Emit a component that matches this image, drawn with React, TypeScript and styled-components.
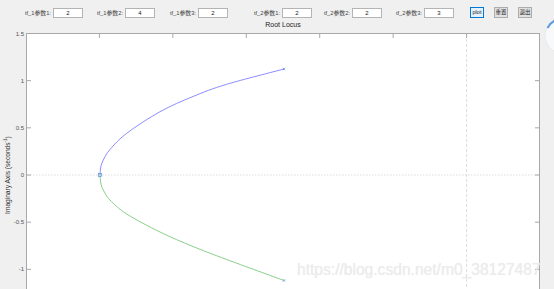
import React from "react";
import styled, { createGlobalStyle } from "styled-components";

const GlobalStyle = createGlobalStyle`
  html, body { margin: 0; padding: 0; background: #f0f0f0; }
  body { font-family: "Liberation Sans", Arial, "Noto Sans CJK SC", sans-serif; }
`;

const Page = styled.div`
  position: relative;
  width: 554px;
  height: 289px;
  overflow: hidden;
  background: #f0f0f0;
  display: flex;
  flex-direction: column;
`;

const Toolbar = styled.div`
  display: flex;
  align-items: center;
  height: 11px;
  margin-top: 7px;
`;

const Field = styled.div<{ $offset: number }>`
  display: flex;
  align-items: center;
  margin-left: ${(p) => p.$offset}px;
`;

const Label = styled.span`
  width: 30px;
  margin-right: 2px;
  text-align: right;
  font-size: 5.8px;
  color: #444;
  white-space: nowrap;
  font-family: "Liberation Sans", "Noto Sans CJK SC", sans-serif;
`;

const Input = styled.input`
  box-sizing: border-box;
  width: 30px;
  height: 10px;
  padding: 0;
  border: 1px solid #b4b4b4;
  background: #fff;
  font-size: 6px;
  text-align: center;
  color: #222;
  font-family: "Liberation Sans", sans-serif;
  outline: none;
`;

const Buttons = styled.div`
  display: flex;
  gap: 10px;
  margin-left: 16px;
`;

const Button = styled.button<{ $focused?: boolean }>`
  box-sizing: border-box;
  width: 14px;
  height: 11px;
  padding: 0;
  font-size: 5.5px;
  color: #222;
  background: ${(p) => (p.$focused ? "#e5f1fb" : "#e1e1e1")};
  border: 1px solid ${(p) => (p.$focused ? "#0078d7" : "#adadad")};
  font-family: "Liberation Sans", "Noto Sans CJK SC", sans-serif;
  line-height: 9px;
`;

const Title = styled.div`
  margin-left: 26px;
  width: 514px;
  margin-top: 3px;
  height: 8px;
  line-height: 8px;
  text-align: center;
  font-size: 7px;
  color: #222;
`;

const ChartRow = styled.div`
  display: flex;
  margin-top: 4px;
  height: 284px;
  flex-shrink: 0;
`;

const AxisLabelCol = styled.div`
  width: 14px;
  display: flex;
  align-items: center;
  justify-content: center;
`;

const AxisLabel = styled.span`
  transform: rotate(-90deg);
  white-space: nowrap;
  font-size: 6.6px;
  color: #333;
`;

const TickCol = styled.div`
  position: relative;
  width: 12px;
`;

const TickLabel = styled.span`
  position: absolute;
  right: 2px;
  font-size: 6px;
  line-height: 6px;
  color: #555;
  transform: translateY(-50%);
`;

const PlotFrame = styled.div`
  box-sizing: border-box;
  width: 514px;
  height: 284px;
  border: 1px solid #a8a8a8;
  background: #fff;
`;

const PlotSvg = styled.svg`
  display: block;
`;

const Watermark = styled.div`
  position: absolute;
  left: 297px;
  top: 262px;
  font-size: 15.6px;
  line-height: 16px;
  color: #ececec;
  text-shadow: 0 0 1px rgba(0, 0, 0, 0.08);
  white-space: nowrap;
  font-family: "Liberation Sans", Arial, sans-serif;
`;

const CornerBadge = styled.svg`
  position: absolute;
  left: 540px;
  top: 16px;
`;

const fields = [
  { label: "tf_1参数1:", value: "2", offset: 21 },
  { label: "tf_1参数2:", value: "4", offset: 10 },
  { label: "tf_1参数3:", value: "2", offset: 11 },
  { label: "tf_2参数1:", value: "2", offset: 22 },
  { label: "tf_2参数2:", value: "2", offset: 8 },
  { label: "tf_2参数3:", value: "3", offset: 10 },
];

const Y0 = 175;
const YS = 94.33;
const yOf = (v: number) => Y0 - v * YS;
const yTicks = [1.5, 1, 0.5, 0, -0.5, -1];
const xTicks = [1, 2, 3, 4, 5, 6].map((i) => 26 + 73.43 * i);

type P = [number, number];
function smooth(pts: P[]): string {
  let d = `M${pts[0][0]},${pts[0][1]}`;
  for (let i = 0; i < pts.length - 1; i++) {
    const p0 = pts[i - 1] || pts[i];
    const p1 = pts[i];
    const p2 = pts[i + 1];
    const p3 = pts[i + 2] || p2;
    const c1: P = [p1[0] + (p2[0] - p0[0]) / 6, p1[1] + (p2[1] - p0[1]) / 6];
    const c2: P = [p2[0] - (p3[0] - p1[0]) / 6, p2[1] - (p3[1] - p1[1]) / 6];
    d += ` C${c1[0].toFixed(2)},${c1[1].toFixed(2)} ${c2[0].toFixed(2)},${c2[1].toFixed(2)} ${p2[0]},${p2[1]}`;
  }
  return d;
}

const upper: P[] = [
  [100, 175], [100.8, 167], [103.3, 160], [110, 149.5], [126.7, 133.3],
  [160, 111.7], [193, 96.5], [226.7, 84.3], [284, 69],
];
const lower: P[] = [
  [100, 175], [100.8, 183], [103.3, 190], [110, 200], [126.7, 214],
  [160, 232], [193, 246.5], [226.7, 259.5], [284, 280.5],
];

export default function App() {
  return (
    <Page>
      <GlobalStyle />
      <Toolbar>
        {fields.map((f) => (
          <Field key={f.label} $offset={f.offset}>
            <Label>{f.label}</Label>
            <Input defaultValue={f.value} />
          </Field>
        ))}
        <Buttons>
          <Button $focused>plot</Button>
          <Button>重置</Button>
          <Button>退出</Button>
        </Buttons>
      </Toolbar>
      <Title>Root Locus</Title>
      <ChartRow>
        <AxisLabelCol>
          <AxisLabel>
            Imaginary Axis (seconds<sup style={{ fontSize: "4.5px" }}>-1</sup>)
          </AxisLabel>
        </AxisLabelCol>
        <TickCol>
          {yTicks.map((v) => (
            <TickLabel key={v} style={{ top: yOf(v) - 33 }}>
              {v}
            </TickLabel>
          ))}
        </TickCol>
        <PlotFrame>
          <PlotSvg width={512} height={282} viewBox="27 34 512 282">
            <line x1={27} y1={175} x2={539} y2={175} stroke="#d4d4d4" strokeWidth={0.8} strokeDasharray="1.5 1.5" />
            <line x1={466.6} y1={34} x2={466.6} y2={316} stroke="#d4d4d4" strokeWidth={0.8} strokeDasharray="3 2" />
            {xTicks.map((x) => (
              <line key={x} x1={x} y1={34} x2={x} y2={38} stroke="#a8a8a8" strokeWidth={1} />
            ))}
            {yTicks.map((v) => (
              <g key={v}>
                <line x1={27} y1={yOf(v)} x2={31} y2={yOf(v)} stroke="#a8a8a8" strokeWidth={1} />
                <line x1={535} y1={yOf(v)} x2={539} y2={yOf(v)} stroke="#a8a8a8" strokeWidth={1} />
              </g>
            ))}
            <path d={smooth(upper)} fill="none" stroke="#6f6fff" strokeWidth={0.8} />
            <path d={smooth(lower)} fill="none" stroke="#6cc26c" strokeWidth={0.8} />
            <rect x={98.6} y={173.6} width={2.8} height={2.8} fill="none" stroke="#4f8fd8" strokeWidth={0.7} />
            <g stroke="#4f8fd8" strokeWidth={0.7}>
              <line x1={282.8} y1={67.8} x2={285.2} y2={70.2} />
              <line x1={282.8} y1={70.2} x2={285.2} y2={67.8} />
              <line x1={282.8} y1={279.3} x2={285.2} y2={281.7} />
              <line x1={282.8} y1={281.7} x2={285.2} y2={279.3} />
            </g>
          </PlotSvg>
        </PlotFrame>
      </ChartRow>
      <Watermark>https://blog.csdn.net/m0_38127487</Watermark>
      <CornerBadge width={30} height={40} viewBox="0 0 30 40">
        <circle cx={22} cy={20} r={17} fill="#f8f9fb" stroke="#e6e9ee" strokeWidth={1} />
        <path d="M7.5 12 A17 17 0 0 1 16 4" fill="none" stroke="#5b9be0" strokeWidth={2} />
      </CornerBadge>
    </Page>
  );
}
